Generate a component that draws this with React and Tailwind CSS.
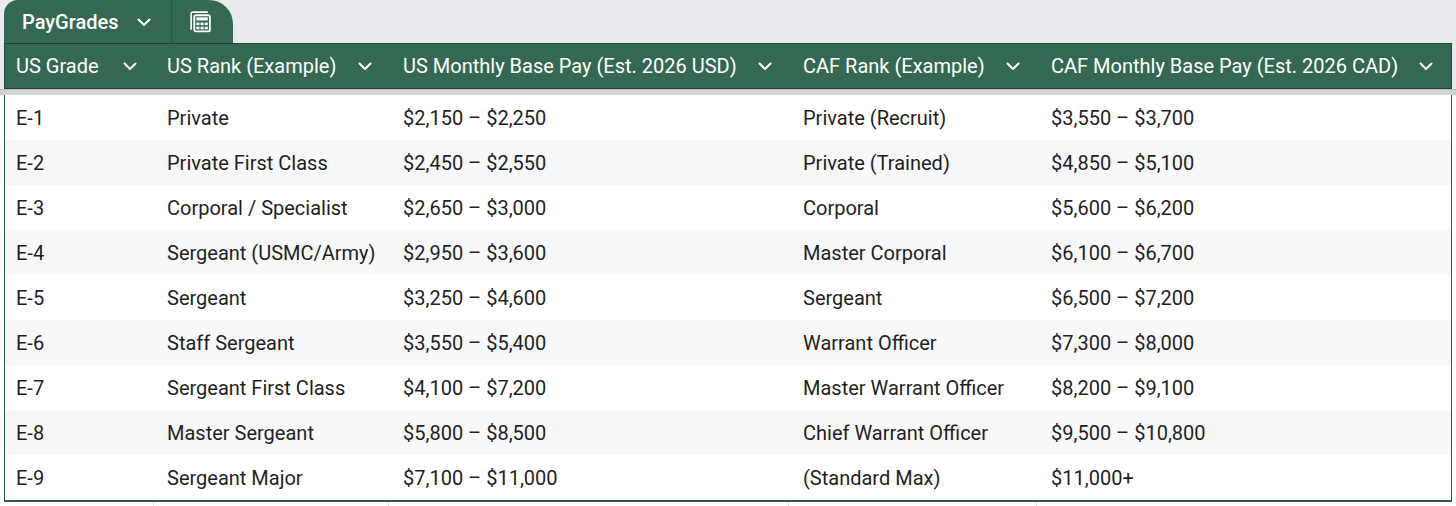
import React from 'react';

const columns = [
  'US Grade',
  'US Rank (Example)',
  'US Monthly Base Pay (Est. 2026 USD)',
  'CAF Rank (Example)',
  'CAF Monthly Base Pay (Est. 2026 CAD)',
];

const rows = [
  ['E-1', 'Private', '$2,150 – $2,250', 'Private (Recruit)', '$3,550 – $3,700'],
  ['E-2', 'Private First Class', '$2,450 – $2,550', 'Private (Trained)', '$4,850 – $5,100'],
  ['E-3', 'Corporal / Specialist', '$2,650 – $3,000', 'Corporal', '$5,600 – $6,200'],
  ['E-4', 'Sergeant (USMC/Army)', '$2,950 – $3,600', 'Master Corporal', '$6,100 – $6,700'],
  ['E-5', 'Sergeant', '$3,250 – $4,600', 'Sergeant', '$6,500 – $7,200'],
  ['E-6', 'Staff Sergeant', '$3,550 – $5,400', 'Warrant Officer', '$7,300 – $8,000'],
  ['E-7', 'Sergeant First Class', '$4,100 – $7,200', 'Master Warrant Officer', '$8,200 – $9,100'],
  ['E-8', 'Master Sergeant', '$5,800 – $8,500', 'Chief Warrant Officer', '$9,500 – $10,800'],
  ['E-9', 'Sergeant Major', '$7,100 – $11,000', '(Standard Max)', '$11,000+'],
];

const gridCols = 'grid grid-cols-[150px_235px_400px_248px_1fr]';
// left padding per column, so text lines up with the sheet
const pads = ['pl-[11px]', 'pl-[12px]', 'pl-[13px]', 'pl-[13px]', 'pl-[13px]'];

function Chevron() {
  return (
    <svg width="16" height="16" viewBox="0 0 16 16" fill="none">
      <path d="M2.5 5.5l5.5 5.5 5.5-5.5" stroke="white" strokeWidth="2" strokeLinecap="round" strokeLinejoin="round" />
    </svg>
  );
}

function TableIcon() {
  return (
    <svg width="25" height="25" viewBox="0 0 24 24" fill="none">
      <path d="M3 20V4.5A1.5 1.5 0 0 1 4.5 3H19" stroke="white" strokeWidth="1.6" />
      <rect x="6" y="6" width="15" height="15.5" rx="1.5" stroke="white" strokeWidth="1.8" />
      <rect x="8" y="8" width="11" height="3" fill="white" />
      <rect x="8" y="13" width="3" height="2.5" fill="white" />
      <rect x="12" y="13" width="3" height="2.5" fill="white" />
      <rect x="16" y="13" width="3" height="2.5" fill="white" />
      <rect x="8" y="17" width="3" height="2.5" fill="white" />
      <rect x="12" y="17" width="3" height="2.5" fill="white" />
      <rect x="16" y="17" width="3" height="2.5" fill="white" />
    </svg>
  );
}

export default function App() {
  return (
    <div className="w-[1456px] h-[506px] bg-white overflow-hidden font-['Roboto',sans-serif]">
      <div className="bg-[#e8eaed] px-1">
        <div className="flex h-[43px]">
          <div className="flex w-[229px] bg-[#356852] text-white rounded-tl-[14px] rounded-tr-[24px]">
            <div className="flex items-center gap-[18px] w-[168px] pl-[18px] border-r border-[#2b5744]">
              <span className="text-[20px] font-medium">PayGrades</span>
              <Chevron />
            </div>
            <div className="flex flex-1 items-center justify-center pr-[4px]">
              <TableIcon />
            </div>
          </div>
        </div>
        <div className={`${gridCols} h-[46px] bg-[#356852] border border-[#1f4736] text-white`}>
          {columns.map((c, j) => (
            <div key={c} className={`flex items-center justify-between ${pads[j]} pr-[17px]`}>
              <span className="text-[20px]">{c}</span>
              <Chevron />
            </div>
          ))}
        </div>
      </div>
      <div className="h-[6px] bg-[#d4d4d4] border-t border-[#bcbcbc]" />
      <div className="mx-1 border-x border-b-2 border-[#2c5a46]">
        {rows.map((r, i) => (
          <div key={r[0]} className={`${gridCols} h-[45px] ${i % 2 === 1 ? 'bg-[#f7f8f9]' : 'bg-white'}`}>
            {r.map((cell, j) => (
              <div key={j} className={`flex items-center ${pads[j]} text-[20px] text-[#1f1f1f]`}>
                {cell}
              </div>
            ))}
          </div>
        ))}
      </div>
      <div className={`${gridCols} h-[6px] mx-1`}>
        <div className="border-r border-[#e3e3e3]" />
        <div className="border-r border-[#e3e3e3]" />
        <div className="border-r border-[#e3e3e3]" />
        <div className="border-r border-[#e3e3e3]" />
        <div />
      </div>
    </div>
  );
}
